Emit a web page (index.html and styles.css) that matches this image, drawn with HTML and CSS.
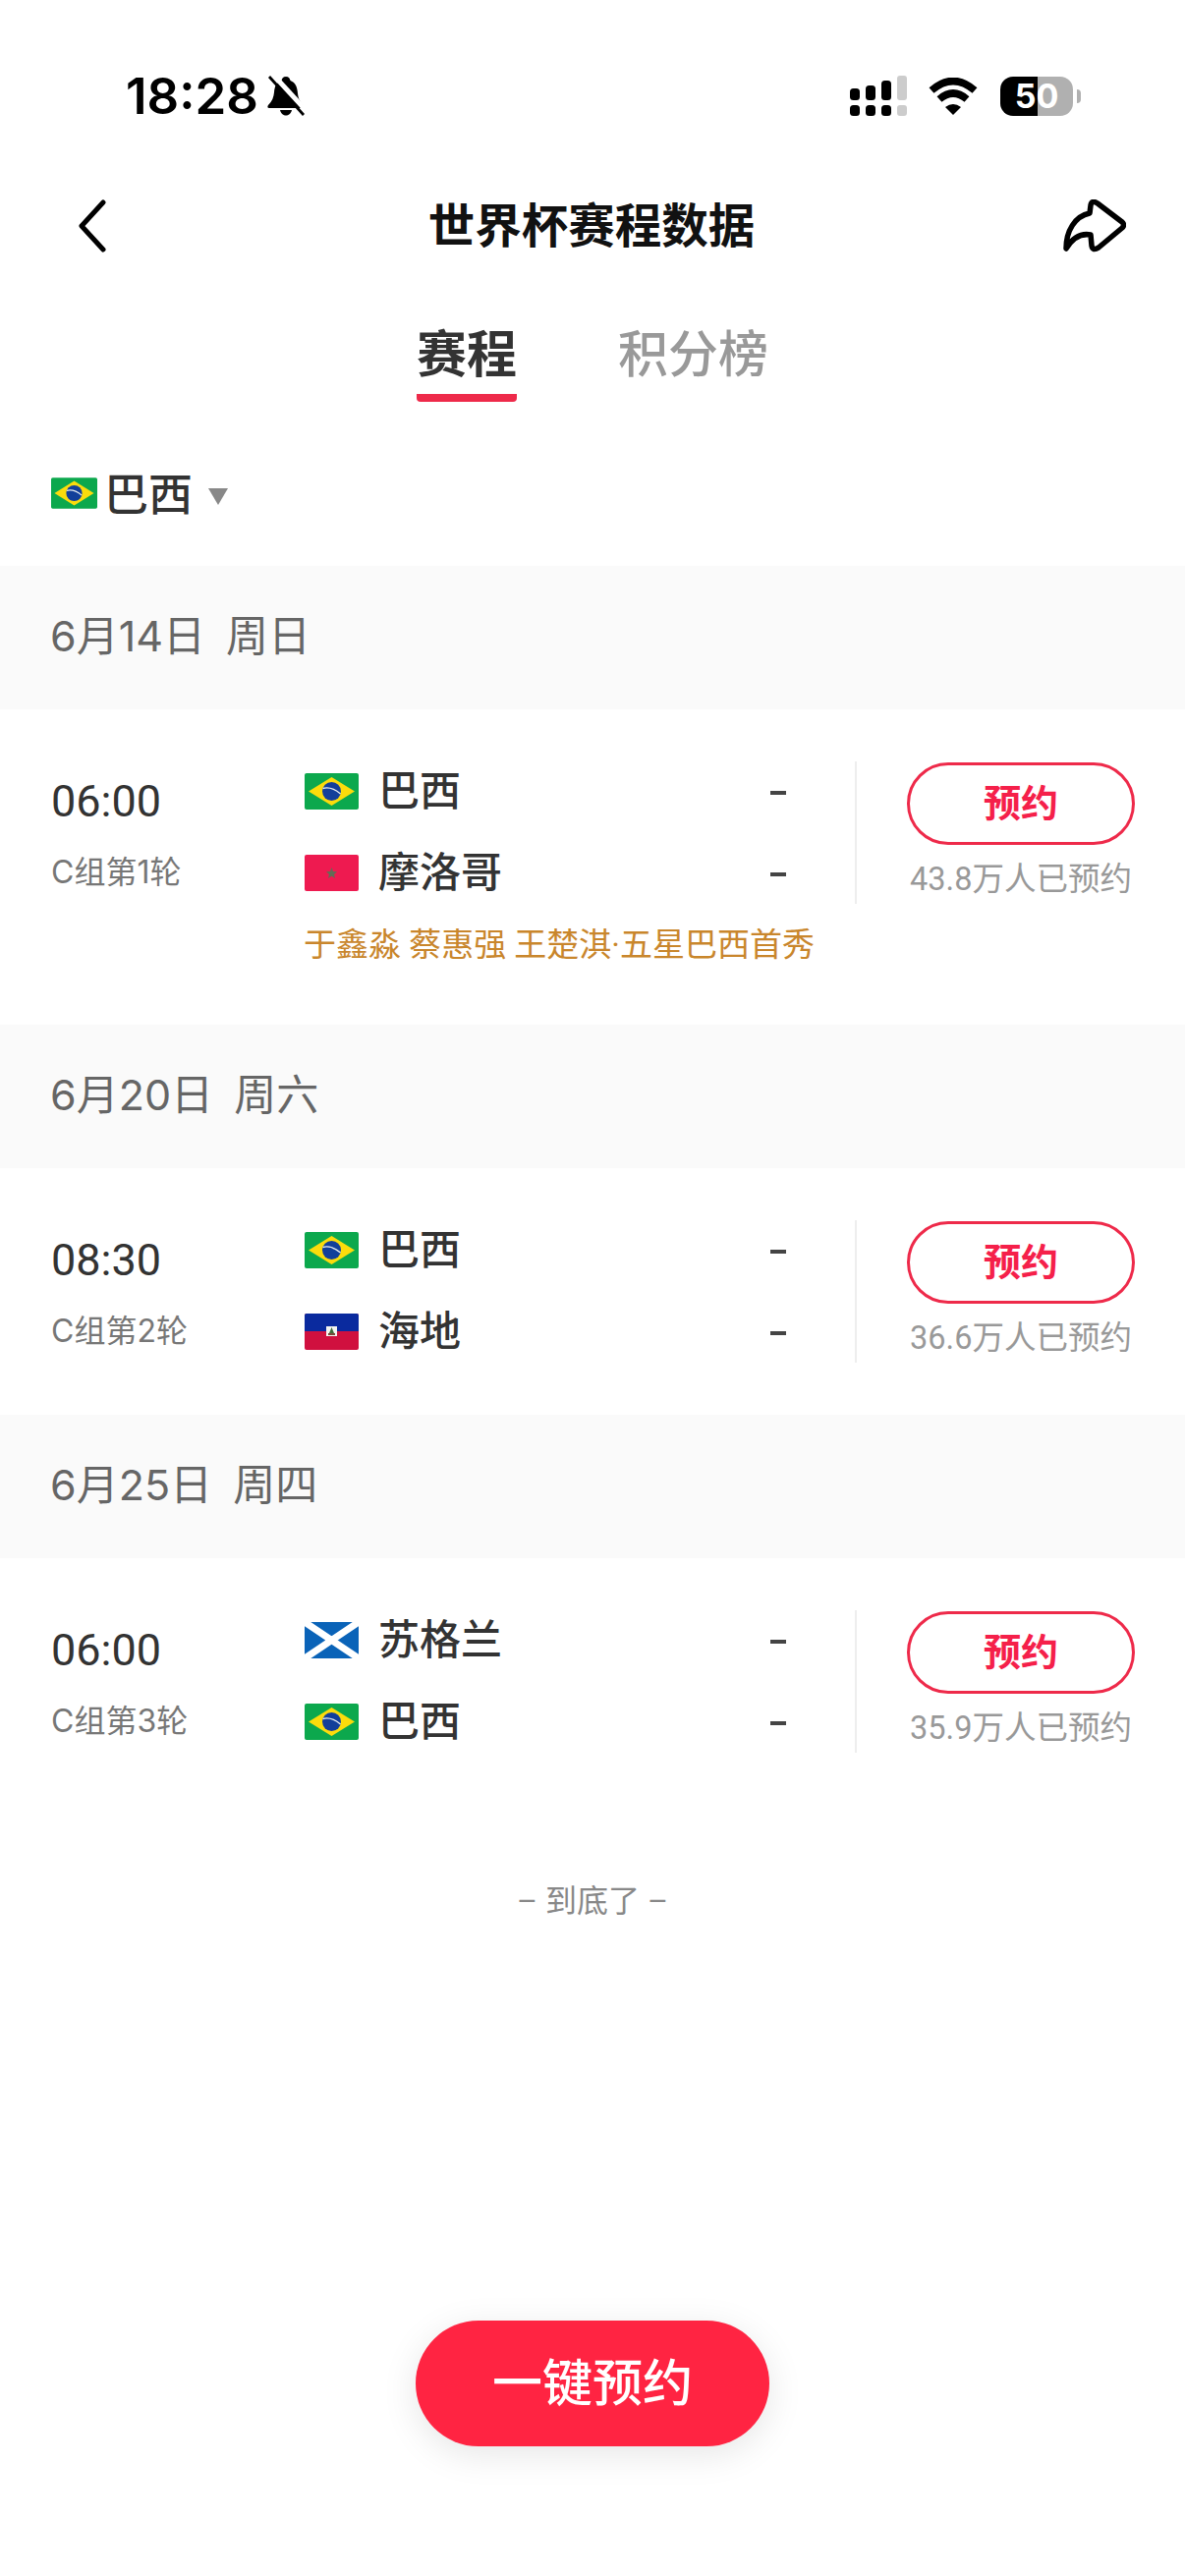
FILE: index.html
```html
<!DOCTYPE html>
<html lang="zh-CN">
<head>
    <meta charset="UTF-8">
    <meta name="viewport" content="width=device-width, initial-scale=1.0">
    <title>世界杯赛程数据</title>
    <link rel="stylesheet" href="styles.css">
</head>
<body>
    <svg class="sprite" width="0" height="0">
        <symbol id="flag-brazil" viewBox="0 0 55 37">
            <rect width="55" height="37" rx="2" fill="#0ca84d"/>
            <path d="M27.5 4 L51 18.5 L27.5 33 L4 18.5 Z" fill="#fbdc0c"/>
            <circle cx="27.5" cy="18.5" r="9.5" fill="#123f9a"/>
            <path d="M18.5 15.5 Q27 13 36.5 21" fill="none" stroke="#e8eef2" stroke-width="1.4"/>
        </symbol>
        <symbol id="flag-morocco" viewBox="0 0 55 37">
            <rect width="55" height="37" rx="2" fill="#ee1a50"/>
            <path d="M27.5 13 L29 17 L33 17.3 L30 20 L31 24 L27.5 21.8 L24 24 L25 20 L22 17.3 L26 17 Z" fill="#636b55"/>
        </symbol>
        <symbol id="flag-haiti" viewBox="0 0 55 37">
            <rect width="55" height="37" rx="2" fill="#d0103f"/>
            <path d="M0 18 V2 Q0 0 2 0 H53 Q55 0 55 2 V18 Z" fill="#0a2a9e"/>
            <rect x="22" y="13" width="11" height="10" fill="#f4f4f0"/>
            <path d="M27.5 14 L30 20 H25 Z" fill="#3d6b3c"/>
            <rect x="24" y="20" width="7" height="2" fill="#7a4a3a"/>
        </symbol>
        <symbol id="flag-scotland" viewBox="0 0 55 37">
            <rect width="55" height="37" fill="#0a63b8"/>
            <path d="M0 0 L55 37 M55 0 L0 37" stroke="#fff" stroke-width="7"/>
        </symbol>
    </svg>

    <div class="page">
        <div class="status-bar">
            <div class="status-left">
                <span class="clock">18:28</span>
                <svg class="bell" viewBox="0 0 38 41">
                    <path d="M19 1 C22 1 23 3 23.500 5 C29 7 30.500 12 31 18 C31.500 24 34 27 37 30 L34 33 H2 C0 33 0 31 1 30 C5 26 6.500 22 7 17 C7.500 11 9 7 14.500 5 C15 3 16 1 19 1 Z" fill="#000"/>
                    <path d="M13 35 H25 C24 39 21.500 40.500 19 40.500 C16.500 40.500 14 39 13 35 Z" fill="#000"/>
                    <path d="M5 -2 L40 36" stroke="#fff" stroke-width="5"/>
                    <path d="M2 1 L37 40" stroke="#000" stroke-width="2.800"/>
                </svg>
            </div>
            <div class="status-right">
                <svg class="signal" viewBox="0 0 58 41">
                    <rect x="0" y="13" width="10" height="12" rx="3.500"/>
                    <rect x="16" y="10" width="10" height="15" rx="3.500"/>
                    <rect x="32" y="5" width="10" height="20" rx="3.500"/>
                    <rect class="off" x="48" y="0" width="10" height="25" rx="3"/>
                    <rect x="0" y="30" width="10" height="11" rx="3.500"/>
                    <rect x="16" y="30" width="10" height="11" rx="3.500"/>
                    <rect x="32" y="30" width="10" height="11" rx="3.500"/>
                    <rect class="off" x="48" y="30" width="10" height="11" rx="3"/>
                </svg>
                <svg class="wifi" viewBox="0 0 50 38">
                    <path d="M3 13 Q25 -6 47 13" fill="none" stroke="#000" stroke-width="7.500"/>
                    <path d="M11 22 Q25 10 39 22" fill="none" stroke="#000" stroke-width="7.500"/>
                    <path d="M17 30 Q25 24 33 30 L25 38 Z"/>
                </svg>
                <div class="battery"><span>50</span></div>
                <div class="battery-tip"></div>
            </div>
        </div>

        <div class="nav">
            <svg class="nav-back" viewBox="0 0 30 54">
                <path d="M26 3 L4 27 L26 51" fill="none" stroke="#000" stroke-width="5" stroke-linecap="round" stroke-linejoin="round"/>
            </svg>
            <h1 class="nav-title">世界杯赛程数据</h1>
            <svg class="nav-share" viewBox="0 0 64 54">
                <path d="M3 50 C3 32 12 17 27 14 L28 6 Q29 0 35 4 L60 23 Q63 26 60 29 L36 49 Q30 53 29 47 L28 36 C17 34 9 40 3 50 Z" fill="none" stroke="#000" stroke-width="5.500" stroke-linejoin="round"/>
            </svg>
        </div>

        <div class="tabs">
            <div class="tab active">赛程</div>
            <div class="tab">积分榜</div>
        </div>

        <div class="filter">
            <svg class="flag-small"><use href="#flag-brazil"/></svg>
            <span class="filter-name">巴西</span>
            <span class="filter-arrow"></span>
        </div>

        <div class="date-band">6月14日&nbsp;&nbsp;周日</div>
        <div class="match has-promo">
            <div class="match-main">
                <div class="match-time">
                    <div class="time">06:00</div>
                    <div class="round">C组第1轮</div>
                </div>
                <div class="teams">
                    <div class="team">
                        <svg class="flag"><use href="#flag-brazil"/></svg>
                        <span class="team-name">巴西</span>
                        <span class="score"></span>
                    </div>
                    <div class="team">
                        <svg class="flag"><use href="#flag-morocco"/></svg>
                        <span class="team-name">摩洛哥</span>
                        <span class="score"></span>
                    </div>
                </div>
                <div class="booking">
                    <div class="book-btn">预约</div>
                    <div class="book-count">43.8万人已预约</div>
                </div>
            </div>
            <div class="promo">于鑫淼 蔡惠强 王楚淇·五星巴西首秀</div>
        </div>

        <div class="date-band">6月20日&nbsp;&nbsp;周六</div>
        <div class="match">
            <div class="match-main">
                <div class="match-time">
                    <div class="time">08:30</div>
                    <div class="round">C组第2轮</div>
                </div>
                <div class="teams">
                    <div class="team">
                        <svg class="flag"><use href="#flag-brazil"/></svg>
                        <span class="team-name">巴西</span>
                        <span class="score"></span>
                    </div>
                    <div class="team">
                        <svg class="flag"><use href="#flag-haiti"/></svg>
                        <span class="team-name">海地</span>
                        <span class="score"></span>
                    </div>
                </div>
                <div class="booking">
                    <div class="book-btn">预约</div>
                    <div class="book-count">36.6万人已预约</div>
                </div>
            </div>
        </div>

        <div class="date-band">6月25日&nbsp;&nbsp;周四</div>
        <div class="match">
            <div class="match-main">
                <div class="match-time">
                    <div class="time">06:00</div>
                    <div class="round">C组第3轮</div>
                </div>
                <div class="teams">
                    <div class="team">
                        <svg class="flag"><use href="#flag-scotland"/></svg>
                        <span class="team-name">苏格兰</span>
                        <span class="score"></span>
                    </div>
                    <div class="team">
                        <svg class="flag"><use href="#flag-brazil"/></svg>
                        <span class="team-name">巴西</span>
                        <span class="score"></span>
                    </div>
                </div>
                <div class="booking">
                    <div class="book-btn">预约</div>
                    <div class="book-count">35.9万人已预约</div>
                </div>
            </div>
        </div>

        <div class="list-end">– 到底了 –</div>

        <div class="fab">一键预约</div>
    </div>
</body>
</html>
```

FILE: styles.css
```css
* {
    box-sizing: border-box;
}
body {
    margin: 0;
    background-color: #fff;
    font-family: Roboto, "Noto Sans CJK SC", sans-serif;
    color: #333;
}
.sprite {
    display: block;
    height: 0;
}
.page {
    position: relative;
    height: 2622px;
    overflow: hidden;
}

/* status bar */
.status-bar {
    display: flex;
    justify-content: space-between;
    align-items: center;
    height: 41px;
    margin-top: 77px;
    padding: 0 106px 0 128px;
}
.status-left, .status-right {
    display: flex;
    align-items: center;
}
.clock {
    font-family: Inter, sans-serif;
    font-size: 51px;
    font-weight: 600;
    line-height: 41px;
    color: #000;
}
.bell {
    width: 38px;
    height: 41px;
    margin-left: 9px;
}
.signal {
    width: 58px;
    height: 41px;
}
.signal .off {
    fill: #ccc;
}
.wifi {
    width: 50px;
    height: 38px;
    margin-left: 22px;
}
.battery {
    width: 74px;
    height: 40px;
    margin-left: 23px;
    border-radius: 13px;
    background: linear-gradient(to right, #000 38px, #b0b0b0 38px);
    text-align: center;
    font-family: Inter, sans-serif;
    font-size: 34px;
    font-weight: 700;
    line-height: 40px;
    color: #fff;
}
.battery-tip {
    width: 4px;
    height: 14px;
    margin-left: 4px;
    border-radius: 0 7px 7px 0;
    background-color: #b0b0b0;
}

/* nav */
.nav {
    display: grid;
    grid-template-columns: 1fr auto 1fr;
    align-items: center;
    height: 54px;
    margin-top: 84px;
    padding: 0 60px 0 79px;
}
.nav-back {
    width: 30px;
    height: 54px;
}
.nav-title {
    margin: 2px 0 0 -21px;
    font-size: 47.5px;
    font-weight: 700;
    line-height: 54px;
    color: #111;
}
.nav-share {
    justify-self: end;
    width: 64px;
    height: 54px;
}

/* tabs */
.tabs {
    display: flex;
    justify-content: center;
    gap: 103px;
    margin-top: 76px;
}
.tab {
    height: 77px;
    font-size: 51px;
    line-height: 60px;
    font-weight: 500;
    color: #999;
}
.tab.active {
    font-weight: 700;
    color: #333;
    border-bottom: 8px solid #ee2a4a;
    border-radius: 0 0 4px 4px;
}

/* team filter */
.filter {
    display: flex;
    align-items: center;
    height: 167px;
    padding: 16px 0 0 52px;
}
.flag-small {
    width: 47px;
    height: 32px;
    margin-top: 3px;
}
.filter-name {
    margin-left: 7px;
    font-size: 45px;
    font-weight: 500;
}
.filter-arrow {
    width: 0;
    height: 0;
    margin: 10px 0 0 16px;
    border-left: 10px solid transparent;
    border-right: 10px solid transparent;
    border-top: 17px solid #888;
}

/* match list */
.date-band {
    height: 146px;
    padding-left: 51px;
    background-color: #fafafa;
    font-family: Inter, "Noto Sans CJK SC", sans-serif;
    font-size: 43px;
    line-height: 142px;
    word-spacing: -1.5px;
    color: #666;
}
.match {
    padding: 53px 0;
}
.match.has-promo {
    padding-bottom: 57px;
}
.match-main {
    display: flex;
    height: 145px;
}
.match-time {
    width: 310px;
    padding: 11px 0 0 52px;
}
.time {
    font-size: 45px;
    line-height: 60px;
}
.round {
    margin-top: 18px;
    font-family: Inter, "Noto Sans CJK SC", sans-serif;
    font-size: 32px;
    line-height: 48px;
    color: #777;
}
.teams {
    display: flex;
    flex-direction: column;
    gap: 23px;
    width: 491px;
}
.team {
    display: flex;
    align-items: center;
    height: 60px;
}
.flag {
    width: 55px;
    height: 37px;
}
.team-name {
    flex: 1;
    margin: 0 0 7px 20px;
    font-size: 42px;
    font-weight: 500;
}
.score {
    width: 16px;
    height: 4px;
    margin: 3px 1px 0 0;
    background-color: #444;
}
.booking {
    width: 336px;
    margin-left: 69px;
    padding-left: 51px;
    border-left: 2px solid #eee;
}
.book-btn {
    width: 232px;
    height: 84px;
    margin-top: 1px;
    border: 3px solid #ee2a4a;
    border-radius: 42px;
    text-align: center;
    font-size: 38px;
    font-weight: 700;
    line-height: 78px;
    color: #f5204a;
}
.book-count {
    width: 232px;
    margin-top: 11px;
    text-align: center;
    font-size: 32.5px;
    line-height: 48px;
    white-space: nowrap;
    color: #999;
}
.promo {
    margin: 18px 0 0 309px;
    font-size: 33px;
    line-height: 48px;
    color: #c9862c;
}
.list-end {
    margin-top: 74px;
    text-align: center;
    font-size: 32px;
    line-height: 48px;
    color: #888;
}
.fab {
    position: absolute;
    left: 423px;
    top: 2362px;
    width: 360px;
    height: 128px;
    border-radius: 64px;
    background-color: #ff2442;
    box-shadow: 0 8px 36px rgba(0, 0, 0, 0.1);
    text-align: center;
    font-size: 51px;
    font-weight: 500;
    line-height: 130px;
    color: #fff;
}
```
